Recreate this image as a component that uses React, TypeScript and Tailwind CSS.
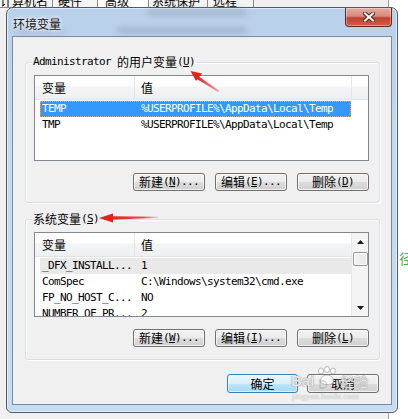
import React from "react";

const ZH = "font-['Noto_Sans_CJK_SC',sans-serif] text-[12px] leading-[12px]";
const MONO = "font-['DejaVu_Sans_Mono','Noto_Sans_CJK_SC',monospace] text-[11px] tracking-[-0.62px]";

type Row = { name: string; value: string; sel?: "active" | "inactive" };

const USER_ROWS: Row[] = [
  { name: "TEMP", value: "%USERPROFILE%\\AppData\\Local\\Temp", sel: "active" },
  { name: "TMP", value: "%USERPROFILE%\\AppData\\Local\\Temp" },
];

const SYS_ROWS: Row[] = [
  { name: "_DFX_INSTALL...", value: "1", sel: "inactive" },
  { name: "ComSpec", value: "C:\\Windows\\system32\\cmd.exe" },
  { name: "FP_NO_HOST_C...", value: "NO" },
  { name: "NUMBER_OF_PR...", value: "2" },
];

const TABS = [
  { label: "计算机名", w: "w-[53px] pl-0", sel: false },
  { label: "硬件", w: "w-[45px] pl-[5px]", sel: false },
  { label: "高级", w: "w-[51px] pl-[7px]", sel: true },
  { label: "系统保护", w: "w-[59px] pl-[3px]", sel: false },
  { label: "远程", w: "w-[46px] pl-[5px]", sel: false },
];

function Acc({ k, tail = "" }: { k: string; tail?: string }) {
  return (
    <span className={MONO}>
      (<span className="underline decoration-1 underline-offset-[1px]">{k}</span>){tail}
    </span>
  );
}

function Btn({ zh, k, tail, primary }: { zh: string; k?: string; tail?: string; primary?: boolean }) {
  return (
    <div
      className={
        primary
          ? "w-[71px] h-[19px] flex items-center justify-center rounded-[3px] border border-[#3c7fb1] bg-[linear-gradient(to_bottom,#eaf6fd_0%,#d9f0fc_50%,#bee6fd_50%,#a7d9f5_100%)] shadow-[inset_0_0_0_1px_rgba(255,255,255,0.6)] text-black"
          : "w-[72px] h-[18px] flex items-center justify-center rounded-[3px] border border-[#707070] bg-[linear-gradient(to_bottom,#f2f2f2_0%,#ebebeb_50%,#dddddd_50%,#cfcfcf_100%)] shadow-[inset_0_0_0_1px_rgba(255,255,255,0.7)] text-black"
      }
    >
      <span className={ZH}>{zh}</span>
      {k && <Acc k={k} tail={tail} />}
    </div>
  );
}

function Triangle({ down }: { down?: boolean }) {
  return (
    <svg width="7" height="4" viewBox="0 0 7 4">
      <path d={down ? "M0 0 H7 L3.5 4 Z" : "M0 4 H7 L3.5 0 Z"} fill="#1a1a1a" />
    </svg>
  );
}

function Scrollbar() {
  return (
    <div className="w-[17px] flex flex-col bg-[#f4f4f4] border-l border-[#e8e8e8]">
      <div className="h-[17px] flex items-center justify-center">
        <Triangle />
      </div>
      <div className="flex-1 pt-[2px] pl-px">
        <div className="w-[15px] h-[14px] rounded-[2px] border border-[#979797] bg-[linear-gradient(to_right,#f3f3f3,#e8e8e8)] shadow-[inset_0_0_0_1px_#fff]" />
      </div>
      <div className="h-[17px] flex items-center justify-center">
        <Triangle down />
      </div>
    </div>
  );
}

function ListBox({ rows, h, scroll }: { rows: Row[]; h: string; scroll?: boolean }) {
  return (
    <div className={`flex border border-[#828790] bg-white overflow-hidden ${h}`}>
      <div className="flex-1 flex flex-col min-w-0">
        <div className="h-[24px] shrink-0 flex bg-[linear-gradient(to_bottom,#ffffff_0%,#ffffff_40%,#f3f4f6_50%,#eff0f2_100%)] border-b border-[#e2e4e7]">
          <div className="w-[100px] shrink-0 flex items-center pl-[7px] border-r border-[#e3e5e8]">
            <span className={ZH}>变量</span>
          </div>
          <div className="w-[217px] shrink-0 flex items-center pl-[6px] border-r border-[#e3e5e8]">
            <span className={ZH}>值</span>
          </div>
          <div className="flex-1" />
        </div>
        <div className="flex-1 overflow-hidden pt-px">
          {rows.map((r) => (
            <div
              key={r.name}
              className={
                r.sel === "active"
                  ? "ml-[5px] w-[311px] h-[16px] flex items-center bg-[#3399ff] text-white outline-1 outline-dotted outline-[#e9a13b] -outline-offset-1"
                  : r.sel === "inactive"
                  ? "ml-[5px] w-[311px] h-[16px] flex items-center bg-[#e9e9e9] text-black"
                  : "ml-[5px] w-[311px] h-[16px] flex items-center text-black"
              }
            >
              <span className={`w-[99px] pl-[2px] shrink-0 whitespace-nowrap ${MONO}`}>{r.name}</span>
              <span className={`pl-[2px] whitespace-nowrap ${MONO}`}>{r.value}</span>
            </div>
          ))}
        </div>
      </div>
      {scroll && <Scrollbar />}
    </div>
  );
}

function Group({ legend, children, mt, pb }: { legend: React.ReactNode; children: React.ReactNode; mt: string; pb: string }) {
  return (
    <div
      className={`relative ${mt} ml-[12px] w-[355px] border border-[#d5dfe5] rounded-[3px] pt-[12px] pl-[8px] pr-[10px] ${pb} shadow-[inset_1px_1px_0_#fff,1px_1px_0_#fff]`}
    >
      <div className="absolute left-[6px] -top-[7px] h-[12px] px-px flex items-center bg-[#f0f0f0] text-black">
        {legend}
      </div>
      {children}
    </div>
  );
}

export default function App() {
  return (
    <div className="relative w-[408px] h-[419px] overflow-hidden bg-white">
      {/* parent dialog behind */}
      <div className="w-[389px] h-full flex flex-col bg-[#f0f0f0] border-r border-[#a0a0a0]">
        <div className="h-[8px] flex overflow-hidden border-b border-[#898c95]">
          {TABS.map((t) => (
            <div
              key={t.label}
              className={`${t.w} h-[8px] shrink-0 overflow-hidden border-r border-[#898c95] ${t.sel ? "bg-white" : "bg-[#f4f4f4]"}`}
            >
              <div className={`-mt-[5px] whitespace-nowrap text-black ${ZH}`}>{t.label}</div>
            </div>
          ))}
        </div>
      </div>
      <span className="absolute left-[399px] top-[251px] text-[14px] leading-[14px] text-[#4caf50] font-['Noto_Sans_CJK_SC',sans-serif]">径</span>

      {/* dialog window */}
      <div className="absolute left-[6px] top-[7px] w-[392px] h-[406px] flex flex-col px-[5px] pb-[7px] rounded-t-[7px] rounded-b-[6px] border border-[#4d5b6b] bg-[linear-gradient(to_bottom,#b9d0ea_0%,#c3d8ef_30%,#c7dcf2_100%)] shadow-[inset_0_0_0_1px_rgba(255,255,255,0.55)]">
        <div className="absolute left-[140px] top-[2px] w-[100px] h-[5px] rounded-full bg-[#6f8197]/40 blur-[3px]" />
        <div className="absolute left-[110px] top-[20px] w-[130px] h-[5px] rounded-full bg-[#6f8197]/45 blur-[3px]" />
        <div className="absolute left-[8px] top-[21px] w-[50px] h-[4px] rounded-full bg-[#6f8197]/30 blur-[3px]" />
        <div className="relative h-[28px] shrink-0 flex justify-between">
          <div className={`pl-px pt-[10px] text-[#111] [text-shadow:0_0_5px_#fff,0_0_3px_#fff] ${ZH}`}>环境变量</div>
          <div className="w-[47px] h-[19px] flex items-center justify-center rounded-b-[4px] border border-t-0 border-[#5f2a22] bg-[linear-gradient(to_bottom,#e6ada1_0%,#d88a7c_45%,#c2402e_55%,#d2604c_100%)] shadow-[inset_0_0_0_1px_rgba(255,255,255,0.35)]">
            <svg width="12" height="10" viewBox="0 0 12 10">
              <path d="M2 1.5 L10 8.5 M10 1.5 L2 8.5" stroke="#4a2520" strokeWidth="4" strokeLinecap="square" />
              <path d="M2 1.5 L10 8.5 M10 1.5 L2 8.5" stroke="#ffffff" strokeWidth="2" strokeLinecap="square" />
            </svg>
          </div>
        </div>

        <div className="flex-1 flex flex-col bg-[#f0f0f0] border border-[#7b8b9e]">
          <Group
            mt="mt-[25px]"
            pb="pb-[11px]"
            legend={
              <>
                <span className={MONO}>Administrator&nbsp;</span>
                <span className={ZH}>的用户变量</span>
                <Acc k="U" />
              </>
            }
          >
            <ListBox rows={USER_ROWS} h="h-[86px]" />
            <div className="mt-[12px] flex justify-end gap-[10px]">
              <Btn zh="新建" k="N" tail="..." />
              <Btn zh="编辑" k="E" tail="..." />
              <Btn zh="删除" k="D" />
            </div>
          </Group>

          <Group
            mt="mt-[16px]"
            pb="pb-[12px]"
            legend={
              <>
                <span className={ZH}>系统变量</span>
                <Acc k="S" />
              </>
            }
          >
            <ListBox rows={SYS_ROWS} h="h-[85px]" scroll />
            <div className="mt-[12px] flex justify-end gap-[10px]">
              <Btn zh="新建" k="W" tail="..." />
              <Btn zh="编辑" k="I" tail="..." />
              <Btn zh="删除" k="L" />
            </div>
          </Group>

          <div className="mt-[14px] pr-[12px] flex justify-end items-start gap-[9px]">
            <Btn zh="确定" primary />
            <div className="w-[72px] h-[19px] flex items-center justify-center rounded-[3px] border border-[#707070] bg-[linear-gradient(to_bottom,#f2f2f2_0%,#ebebeb_50%,#dddddd_50%,#cfcfcf_100%)] shadow-[inset_0_0_0_1px_rgba(255,255,255,0.7)] text-black">
              <span className={ZH}>取消</span>
            </div>
          </div>
        </div>
      </div>

      {/* watermark */}
      <div className="absolute left-[291px] top-[366px] flex items-end text-white/80 [text-shadow:0_0_1px_#8a8a8a,0_0_1px_#8a8a8a] pointer-events-none">
        <span className="font-['Liberation_Sans',sans-serif] font-bold text-[15px] leading-[15px] mb-[2px]">Bai</span>
        <svg width="26" height="24" viewBox="0 0 26 24" className="opacity-80">
          <g fill="#ffffff" stroke="#9a9a9a" strokeWidth="0.8">
            <ellipse cx="7" cy="5" rx="2.5" ry="3" />
            <ellipse cx="13" cy="3.5" rx="2.5" ry="3" />
            <ellipse cx="19" cy="5" rx="2.5" ry="3" />
            <path d="M13 9 C8 9 5 14 7 17 C9 19 17 19 19 17 C21 14 18 9 13 9 Z" />
            <path d="M6 22 V13 M6 22 H10 C13 22 13 15 10 15 H6" fill="none" />
          </g>
        </svg>
        <span className="font-['Noto_Sans_CJK_SC',sans-serif] text-[14px] leading-[14px] mb-[2px]">经验</span>
      </div>
      <div className="absolute left-[292px] top-[392px] text-[9px] leading-[9px] font-['Liberation_Serif',serif] text-white/80 [text-shadow:0_0_1px_#8a8a8a]">
        jingyan.baidu.com
      </div>

      {/* red arrows */}
      <svg className="absolute left-0 top-0 pointer-events-none" width="408" height="419" viewBox="0 0 408 419">
        <defs>
          <linearGradient id="fade1" x1="198" y1="77" x2="219" y2="92" gradientUnits="userSpaceOnUse">
            <stop offset="0" stopColor="#e4211b" />
            <stop offset="1" stopColor="#e4211b" stopOpacity="0.35" />
          </linearGradient>
          <linearGradient id="fade2" x1="110" y1="0" x2="158" y2="0" gradientUnits="userSpaceOnUse">
            <stop offset="0" stopColor="#e4211b" />
            <stop offset="0.7" stopColor="#e4211b" stopOpacity="0.8" />
            <stop offset="1" stopColor="#e4211b" stopOpacity="0.2" />
          </linearGradient>
        </defs>
        <path d="M197.5 75.5 L219 90.5 L218 92 L196 78.5 Z" fill="url(#fade1)" />
        <polygon points="190.5,71 202,73.5 196,81" fill="#e4211b" />
        <path d="M111 216.3 L158 216.8 L158 217.8 L111 219.7 Z" fill="url(#fade2)" />
        <polygon points="99,218 113,213.5 113,222.5" fill="#e4211b" />
      </svg>
    </div>
  );
}
